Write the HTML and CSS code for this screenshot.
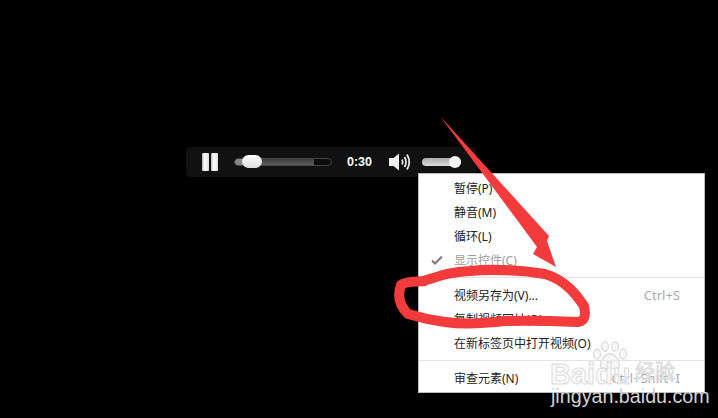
FILE: index.html
```html
<!DOCTYPE html>
<html lang="zh-CN">
<head>
<meta charset="utf-8">
<title>视频右键菜单</title>
<link rel="stylesheet" href="styles.css">
</head>
<body>
<main class="stage">
  <div class="player">
    <div class="pause"><span class="pause-bar"></span><span class="pause-bar"></span></div>
    <div class="progress">
      <span class="progress-played"></span>
      <span class="progress-buffer"></span>
      <span class="progress-thumb"></span>
    </div>
    <span class="time">0:30</span>
    <svg class="speaker" viewBox="0 0 24 20" width="24" height="20">
      <path class="speaker-body" d="M1 6H5.5L11 1.5V18.5L5.5 14H1Z"/>
      <path class="speaker-wave" d="M14 7.5Q15.5 10 14 12.5"/>
      <path class="speaker-wave" d="M16.5 5Q19.5 10 16.5 15"/>
      <path class="speaker-wave" d="M19 2.5Q23.5 10 19 17.5"/>
    </svg>
    <div class="volume"><span class="volume-thumb"></span></div>
  </div>

  <div class="menu">
    <div class="item"><span class="mark"></span><span class="label">暂停(P)</span></div>
    <div class="item"><span class="mark"></span><span class="label">静音(M)</span></div>
    <div class="item"><span class="mark"></span><span class="label">循环(L)</span></div>
    <div class="item item-off">
      <span class="mark"><svg viewBox="0 0 12 10" width="12" height="10"><path class="check" d="M1 5.5L4 8.5L11 1.5"/></svg></span>
      <span class="label">显示控件(C)</span>
    </div>
    <div class="sep"></div>
    <div class="item"><span class="mark"></span><span class="label">视频另存为(V)...</span><span class="keys">Ctrl+S</span></div>
    <div class="item"><span class="mark"></span><span class="label">复制视频网址(O)</span></div>
    <div class="item"><span class="mark"></span><span class="label">在新标签页中打开视频(O)</span></div>
    <div class="sep"></div>
    <div class="item"><span class="mark"></span><span class="label">审查元素(N)</span><span class="keys">Ctrl+Shift+I</span></div>
  </div>

  <div class="mark-baidu">
    <svg class="paw" viewBox="0 0 36 30" width="36" height="30">
      <ellipse cx="5" cy="13" rx="3.5" ry="5"/>
      <ellipse cx="13" cy="5.5" rx="3.5" ry="4.5"/>
      <ellipse cx="23" cy="5.5" rx="3.5" ry="4.5"/>
      <ellipse cx="31" cy="13" rx="3.5" ry="5"/>
      <path d="M18 13C12 13 7 22 9 26C12 29 15 27 18 27C21 27 24 29 27 26C29 22 24 13 18 13Z"/>
    </svg>
    <span class="brand-word">Baidu</span>
    <span class="brand-cn">经验</span>
    <span class="brand-url">jingyan.baidu.com</span>
  </div>

  <svg class="ink" viewBox="0 0 718 418" width="718" height="418">
    <path class="ink-fill" d="M440 116L549 236L547 241L556 267L533 254L537 247Z"/>
    <path class="ink-line" d="M423 281C440 276 450 272 470 271C490 269 520 270 545 274C565 280 576 294 584 306C586 315 585 321 578 322C555 321 530 320 505 321C485 323 465 325 445 322C430 320 418 317 408 314C400 306 397 296 401 285C406 281 416 282 425 281"/>
  </svg>
</main>
</body>
</html>
```

FILE: styles.css
```css
* { box-sizing: border-box; }

html, body {
  margin: 0;
  background: #000;
}

.stage {
  position: relative;
  width: 718px;
  height: 418px;
  overflow: hidden;
  background: #000;
  padding: 147px 0 0 186px;
  font-family: "Noto Sans", "Noto Sans CJK SC", sans-serif;
}

/* player */
.player {
  display: flex;
  align-items: center;
  width: 290px;
  height: 30px;
  padding-left: 16px;
  background: #111;
  border-radius: 4px;
}

.pause {
  display: flex;
  gap: 2px;
  margin-right: 16px;
}

.pause-bar {
  display: block;
  width: 7px;
  height: 18px;
  border-radius: 1px;
  background: linear-gradient(90deg, #bbb, #fff 40%, #ddd);
}

.progress {
  position: relative;
  display: flex;
  width: 98px;
  height: 8px;
  border: 1px solid #444;
  border-radius: 4px;
  background: #0c0c0c;
}

.progress-played {
  width: 12px;
  background: #888;
  border-radius: 3px 0 0 3px;
}

.progress-buffer {
  width: 67px;
  background: linear-gradient(#3c3c3c, #5c5c5c);
}

.progress-thumb {
  position: absolute;
  left: 7px;
  top: -4px;
  width: 20px;
  height: 13px;
  border-radius: 7px;
  background: linear-gradient(#fff, #ddd);
}

.time {
  margin-left: 15px;
  width: 41px;
  color: #fff;
  font: bold 12.5px "Liberation Sans", sans-serif;
}

.speaker {
  display: block;
  flex: none;
}

.speaker-body { fill: #eee; }

.speaker-wave {
  fill: none;
  stroke: #e4e4e4;
  stroke-width: 1.8;
}

.volume {
  position: relative;
  width: 39px;
  height: 8px;
  margin-left: 10px;
  border-radius: 4px;
  background: linear-gradient(#aaa, #ddd);
}

.volume-thumb {
  position: absolute;
  right: 0;
  top: -2px;
  width: 12px;
  height: 12px;
  border-radius: 50%;
  background: #f2f2f2;
}

/* context menu */
.menu {
  position: absolute;
  left: 418px;
  top: 173px;
  width: 287px;
  height: 220px;
  padding: 2px 0;
  background: #fff;
  border: 1px solid #bbb;
  font-size: 12px;
  color: #222;
}

.item {
  display: flex;
  align-items: center;
  height: 24px;
  padding-right: 24px;
}

.item-off { color: #a0a0a0; }

.mark {
  display: flex;
  align-items: center;
  width: 35px;
  padding-left: 12px;
}

.check {
  fill: none;
  stroke: #777;
  stroke-width: 2;
}

.label { flex: 1; }

.keys {
  color: #aaa;
  font-size: 13px;
}

.sep {
  height: 1px;
  margin: 5px 0;
  background: #e3e3e3;
}

/* hand-drawn annotation */
.ink {
  position: absolute;
  left: 0;
  top: 0;
}

.ink-fill { fill: #f33b3b; }

.ink-line {
  fill: none;
  stroke: #f33b3b;
  stroke-width: 10;
  stroke-linecap: round;
  stroke-linejoin: round;
}

/* watermark */
.mark-baidu {
  position: absolute;
  left: 551px;
  top: 340px;
  width: 130px;
  height: 64px;
}

.paw {
  position: absolute;
  left: 41px;
  top: 1px;
  fill: rgba(240, 240, 240, 0.5);
  stroke: #dcdcdc;
  stroke-width: 1.3;
}

.brand-word,
.brand-cn {
  position: absolute;
  color: rgba(245, 245, 245, 0.6);
  -webkit-text-stroke: 1px #dcdcdc;
  white-space: nowrap;
}

.brand-word {
  left: -1px;
  top: 19px;
  font: bold 29px/30px "Liberation Sans", sans-serif;
}

.brand-cn {
  left: 84px;
  top: 21px;
  font-size: 20px;
  line-height: 22px;
}

.brand-url {
  position: absolute;
  left: 0;
  top: 46px;
  color: #d2d2d2;
  font: 19.7px/20px "Liberation Sans", sans-serif;
  white-space: nowrap;
}
```
